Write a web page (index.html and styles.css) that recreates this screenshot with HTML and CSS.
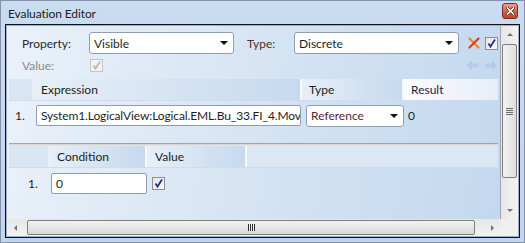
FILE: index.html
```html
<!DOCTYPE html>
<html lang="en">
<head>
    <meta charset="UTF-8">
    <title>Evaluation Editor</title>
    <link rel="stylesheet" href="styles.css">
</head>
<body>
    <div class="window">
        <div class="titlebar">
            <span class="title">Evaluation Editor</span>
            <span class="close">
                <svg width="9" height="8" viewBox="0 0 9 8">
                    <path d="M1.5 1 L7.5 7 M7.5 1 L1.5 7" stroke="#4a1a12" stroke-width="3" stroke-linecap="square"/>
                    <path d="M1.5 1 L7.5 7 M7.5 1 L1.5 7" stroke="#fff" stroke-width="1.6" stroke-linecap="square"/>
                </svg>
            </span>
        </div>

        <div class="client">
            <div class="panel">
                <!-- property / type -->
                <div class="form-row">
                    <span class="lbl">Property:</span>
                    <div class="combo combo-prop"><span>Visible</span><i class="arrow"></i></div>
                    <span class="lbl lbl-type">Type:</span>
                    <div class="combo combo-type"><span>Discrete</span><i class="arrow"></i></div>
                    <svg class="btn-delete" width="14" height="14" viewBox="0 0 14 14">
                        <path d="M2.5 2.5 L11.5 11.5" stroke="#f0802e" stroke-width="2.2" stroke-linecap="round"/>
                        <path d="M11.5 2.5 L2.5 11.5" stroke="#dc3b25" stroke-width="2.2" stroke-linecap="round"/>
                    </svg>
                    <span class="check">
                        <svg width="11" height="11" viewBox="0 0 11 11"><path d="M2.5 5.5 L4.5 8.5 L9 1.5" fill="none" stroke="#22309a" stroke-width="1.8"/></svg>
                    </span>
                </div>

                <div class="form-row row-value">
                    <span class="lbl lbl-disabled">Value:</span>
                    <span class="check disabled">
                        <svg width="11" height="11" viewBox="0 0 11 11"><path d="M2.5 5.5 L4.5 8.5 L9 1.5" fill="none" stroke="#b9b9b9" stroke-width="1.8"/></svg>
                    </span>
                    <span class="nav">
                        <svg width="13" height="11" viewBox="0 0 13 11"><path d="M0.5 5.5 L6 0.5 L6 3.5 L12.5 3.5 L12.5 7.5 L6 7.5 L6 10.5 Z" fill="#b4cce6"/></svg>
                        <svg width="13" height="11" viewBox="0 0 13 11"><path d="M12.5 5.5 L7 0.5 L7 3.5 L0.5 3.5 L0.5 7.5 L7 7.5 L7 10.5 Z" fill="#b4cce6"/></svg>
                    </span>
                </div>

                <!-- expressions -->
                <div class="grid grid-expr">
                    <div class="grid-head">
                        <div class="rowhead rh-expr"></div>
                        <div class="col col-expr">Expression</div>
                        <div class="col col-type">Type</div>
                        <div class="col col-result">Result</div>
                    </div>
                    <div class="grid-row">
                        <span class="idx idx-expr">1.</span>
                        <div class="textbox tb-expr">System1.LogicalView:Logical.EML.Bu_33.FI_4.Mov</div>
                        <div class="combo combo-ref"><span>Reference</span><i class="arrow"></i></div>
                        <span class="result">0</span>
                    </div>
                </div>

                <div class="splitter"></div>

                <!-- conditions -->
                <div class="grid grid-cond">
                    <div class="grid-head">
                        <div class="rowhead rh-cond"></div>
                        <div class="col col-cond">Condition</div>
                        <div class="col col-value">Value</div>
                        <div class="col col-fill"></div>
                    </div>
                    <div class="grid-row">
                        <span class="idx idx-cond">1.</span>
                        <div class="textbox tb-cond">0</div>
                        <span class="check check-cond">
                            <svg width="11" height="11" viewBox="0 0 11 11"><path d="M2.5 5.5 L4.5 8.5 L9 1.5" fill="none" stroke="#22309a" stroke-width="1.8"/></svg>
                        </span>
                    </div>
                </div>
            </div>

            <div class="vscroll">
                <div class="sb-btn"><i class="tri tri-up"></i></div>
                <div class="thumb thumb-v"><i class="grip-v"></i></div>
                <div class="sb-space"></div>
                <div class="sb-btn"><i class="tri tri-down"></i></div>
            </div>
            <div class="hscroll">
                <div class="sb-btn"><i class="tri tri-left"></i></div>
                <div class="thumb thumb-h"><i class="grip-h"></i></div>
                <div class="sb-space"></div>
                <div class="sb-btn"><i class="tri tri-right"></i></div>
            </div>
            <div class="corner"></div>
        </div>
    </div>
</body>
</html>
```

FILE: styles.css
```css
body {
    margin: 0;
    font-family: Lato, "Open Sans", sans-serif;
    font-size: 12px;
    color: #1e1e1e;
}
.window {
    width: 525px;
    height: 243px;
    box-sizing: border-box;
    display: flex;
    flex-direction: column;
    background: linear-gradient(180deg, #c9dcf1 0%, #c0d5ee 100%);
    border: 1px solid #8193a8;
}
.titlebar {
    height: 23px;
    display: flex;
    align-items: center;
    justify-content: space-between;
    padding: 0 6px 0 7px;
}
.title {
    color: #1e1e1e;
    margin-top: 2px;
    letter-spacing: -0.1px;
}
.close {
    width: 14px;
    height: 14px;
    margin-top: -3px;
    border: 1px solid #7a3022;
    border-radius: 3px;
    background: linear-gradient(180deg, #eda08d 0%, #d5654c 50%, #c2432a 100%);
    display: flex;
    align-items: center;
    justify-content: center;
}
.client {
    flex: 1;
    margin: 0 4px 4px 4px;
    border: 1px solid #111;
    box-shadow: inset 0 0 0 1px #9fb0c4;
    padding: 1px;
    display: grid;
    grid-template-columns: 1fr 17px;
    grid-template-rows: 1fr 17px;
    overflow: hidden;
}

/* main panel */
.panel {
    background: linear-gradient(100deg, #eaf1f9 0%, #d6e4f3 50%, #c3d8ef 100%);
    border-right: 1px solid #9aa8b8;
    overflow: hidden;
}
.form-row {
    display: flex;
    align-items: center;
    height: 22px;
    margin-top: 6px;
    padding-left: 15px;
}
.row-value {
    height: 14px;
    margin-top: 4px;
}
.lbl {
    width: 67px;
    color: #2b2b2b;
}
.lbl-type {
    width: 47px;
    margin-left: 13px;
    color: #5b2b2b;
}
.lbl-disabled {
    color: #8a8a8a;
}
.combo {
    height: 22px;
    box-sizing: border-box;
    background: #fff;
    border: 1px solid #8e9fb3;
    border-radius: 3px;
    display: flex;
    align-items: center;
    justify-content: space-between;
    padding: 0 5px 0 4px;
}
.combo-prop { width: 145px; }
.combo-type { width: 165px; }
.combo-ref {
    width: 98px;
    margin-left: 5px;
    color: #5b2230;
}
.arrow {
    width: 0;
    height: 0;
    border-left: 4px solid transparent;
    border-right: 4px solid transparent;
    border-top: 4px solid #111;
}
.btn-delete {
    margin-left: 8px;
}
.check {
    width: 13px;
    height: 13px;
    box-sizing: border-box;
    border: 1px solid #8f8f8f;
    background: linear-gradient(135deg, #e4e4e4, #fafafa);
    display: flex;
    align-items: center;
    justify-content: center;
    margin-left: 4px;
}
.check.disabled {
    margin-left: 1px;
    border-color: #c4c4c4;
    background: #f2f2f2;
}
.nav {
    margin-left: auto;
    margin-right: 2px;
    display: flex;
    gap: 6px;
}

/* grids */
.grid {
    margin: 0 2px;
}
.grid-expr {
    height: 64px;
    margin-top: 7px;
}
.grid-head {
    display: flex;
    height: 21px;
    border-bottom: 1px solid #d3dce6;
}
.rowhead {
    background: #d9e5f2;
}
.rh-expr { width: 23px; }
.rh-cond { width: 39px; }
.col {
    display: flex;
    align-items: center;
    padding-left: 9px;
    box-sizing: border-box;
    background: linear-gradient(90deg, #e7eff8 0%, #c6d9ee 100%);
    border-right: 2px solid #f4f8fc;
    color: #222;
}
.col-expr { width: 270px; }
.col-type { width: 102px; padding-left: 7px; }
.col-result {
    flex: 1;
    border-right: none;
    background: linear-gradient(90deg, #fbfcfe 0%, #e6eef7 100%);
    padding-left: 7px;
    color: #2a1a4a;
}
.col-cond { width: 99px; }
.col-value { width: 100px; padding-left: 8px; }
.col-fill {
    flex: 1;
    border-right: none;
    background: #dce7f3;
}
.grid-row {
    display: flex;
    align-items: center;
    padding-top: 4px;
    height: 21px;
}
.idx {
    box-sizing: border-box;
    color: #222;
}
.idx-expr { width: 27px; padding-left: 6px; }
.idx-cond { width: 42px; padding-left: 19px; }
.textbox {
    height: 21px;
    box-sizing: border-box;
    background: #fff;
    border: 1px solid #8e9fb3;
    border-radius: 2px;
    padding: 0 3px 0 4px;
    display: flex;
    align-items: center;
    white-space: nowrap;
    overflow: hidden;
}
.tb-expr {
    width: 265px;
    letter-spacing: -0.12px;
}
.tb-cond { width: 96px; }
.result {
    margin-left: 4px;
}
.check-cond {
    margin-left: 5px;
}
.splitter {
    margin: 0 2px;
    height: 3px;
    border-top: 1px solid #a3a3a3;
    background: linear-gradient(180deg, #cfcfcf, #e9e9e9);
    box-sizing: border-box;
}
.grid-cond .grid-row {
    padding-top: 5px;
}

/* scrollbars */
.vscroll, .hscroll {
    display: flex;
    background: linear-gradient(90deg, #e6e6e6, #f3f3f3);
}
.vscroll {
    flex-direction: column;
}
.hscroll {
    background: linear-gradient(180deg, #e6e6e6, #f3f3f3);
}
.sb-btn {
    width: 17px;
    height: 17px;
    display: flex;
    align-items: center;
    justify-content: center;
    flex: none;
}
.sb-space { flex: 1; }
.tri {
    width: 0;
    height: 0;
}
.tri-up {
    border-left: 3px solid transparent;
    border-right: 3px solid transparent;
    border-bottom: 3px solid #707070;
}
.tri-down {
    border-left: 3px solid transparent;
    border-right: 3px solid transparent;
    border-top: 3px solid #707070;
}
.tri-left {
    border-top: 3px solid transparent;
    border-bottom: 3px solid transparent;
    border-right: 3px solid #707070;
}
.tri-right {
    border-top: 3px solid transparent;
    border-bottom: 3px solid transparent;
    border-left: 3px solid #707070;
}
.thumb {
    box-sizing: border-box;
    border: 1px solid #7e7e7e;
    border-radius: 2px;
    display: flex;
    align-items: center;
    justify-content: center;
}
.thumb-v {
    margin: 1px 1px 0 1px;
    height: 134px;
    background: linear-gradient(90deg, #f2f2f2, #dedede);
}
.thumb-h {
    margin: 1px 0 1px 3px;
    width: 448px;
    background: linear-gradient(180deg, #f2f2f2, #d9d9d9);
}
.grip-v {
    width: 7px;
    height: 7px;
    background: repeating-linear-gradient(180deg, #6d6d6d 0 1px, transparent 1px 2px);
}
.grip-h {
    width: 7px;
    height: 7px;
    background: repeating-linear-gradient(90deg, #2b2b2b 0 1px, #f4f4f4 1px 2px);
}
.corner {
    background: #efefef;
}
```
